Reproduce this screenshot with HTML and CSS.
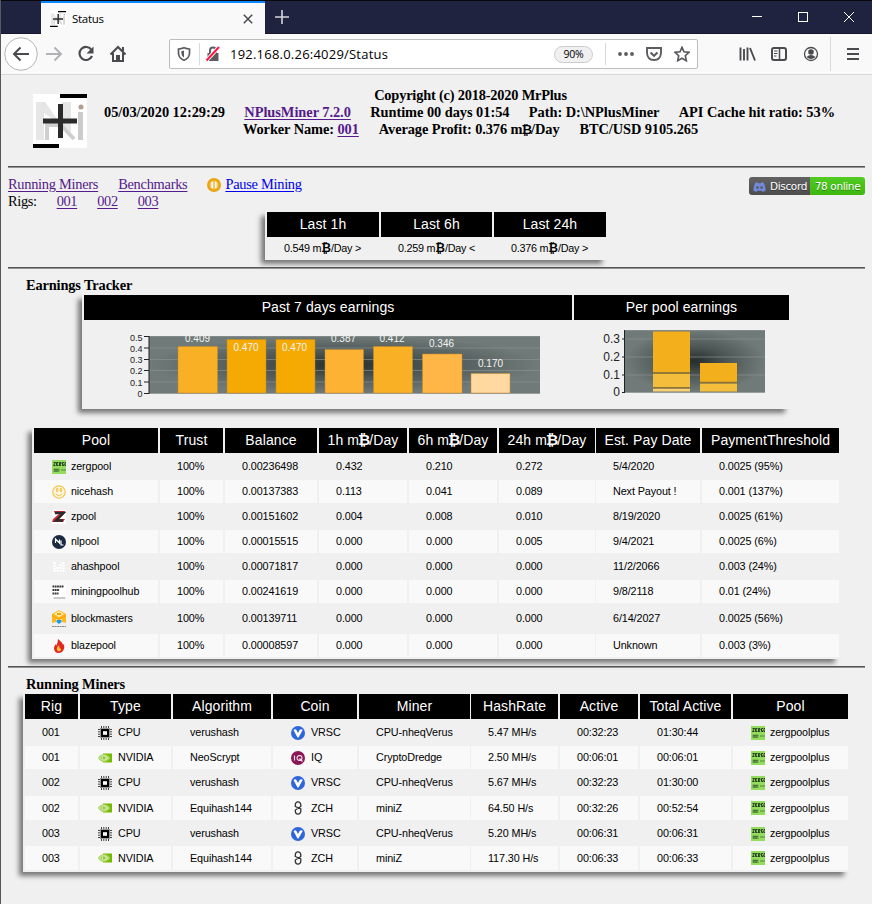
FILE: index.html
```html
<!DOCTYPE html>
<html lang="en">
<head>
<meta charset="utf-8">
<title>Status</title>
<link rel="stylesheet" href="styles.css">
</head>
<body>
<svg class="defs" aria-hidden="true">
  <defs>
    <radialGradient id="glow1" cx="50%" cy="50%" r="50%"><stop offset="0" stop-color="#252e2d"/><stop offset=".45" stop-color="#4c5655"/><stop offset="1" stop-color="#707a78"/></radialGradient>
    <symbol id="plus-logo" viewBox="0 0 54 54"><rect width="54" height="54" fill="#fff"/><path d="M3 8h9l17 24V8h9v30L11 19v27H3z" fill="#e6e6e6"/><path d="M14 29v17M14 31h14M28 31l13 14" stroke="#cfcfcf" stroke-width="4" fill="none"/><path d="M45 18h5v28h-5z" fill="#ccc"/><circle cx="48" cy="13" r="2.500" fill="#b59b8d"/><path d="M10 24.500h34v5H10zM25 10h5v34h-5z" fill="#2b2b2b"/><path d="M27 0h27v4H27zM0 50h26v4H0z"/></symbol>
    <symbol id="zerg" viewBox="0 0 14 14"><rect width="14" height="14" fill="#93dc5e"/><path d="M1.500 2.500h2L1.500 5.500h2M6.500 2.500h-2v3h2m-2-1.500h1.500M7.500 6V2.500h1.500V4H7.500l1.500 2M12 2.500h-1.500v3H12V4M14 2.500h-1v3h1" stroke="#24401c" fill="none"/><path d="M1.500 8.500h6V12h-6z" fill="#6da04c"/><path d="M2 9.500h5m-5 1.500h4M9 10h5" stroke="#3e6e30" stroke-width=".8"/></symbol>
    <symbol id="nice" viewBox="0 0 14 14"><circle cx="7" cy="7" r="6.200" fill="#fff8e5" stroke="#f8c650" stroke-width="1.300"/><path d="M4.600 3.500h1.300v3H4.600zM8.300 3.500h1.300v3H8.300zM3.500 8.500q3.500 4 7 0" fill="none" stroke="#f5b93c" stroke-width=".9"/></symbol>
    <symbol id="zpool" viewBox="0 0 14 14"><rect width="14" height="14" fill="#fff"/><path d="M2 1h11l-1 3-5 5h6l-2 3H0l1-3 6-5H3z" fill="#d22a31"/><path d="M3 3h8.500L4 10.500h7" fill="none" stroke="#2b2b2b" stroke-width="2.400"/></symbol>
    <symbol id="nlpool" viewBox="0 0 14 14"><circle cx="7" cy="7" r="7" fill="#1b2a41"/><path d="M3.500 8V4l4 4V4.500M9 5.500V10h2.500" fill="none" stroke="#fff" stroke-width="1.200"/></symbol>
    <symbol id="ahash" viewBox="0 0 14 14"><path d="M2.500 2v10M5.500 7v5M8.500 4v8M11.500 2v10" stroke="#fff" stroke-width="2.200" stroke-dasharray="2 .7"/></symbol>
    <symbol id="hub" viewBox="0 0 14 14"><rect width="14" height="14" fill="#fff"/><path d="M.5 1.500h11M.5 5h7M.5 8.500h6" stroke="#333" stroke-width="2" stroke-dasharray="1.800 .5"/><path d="M1.500 13h12" stroke="#777" stroke-width=".8"/></symbol>
    <symbol id="block" viewBox="0 0 14 18"><path d="M7 0l7 4v9l-4-1V9L7 10 4 9v3l-4 1V4z" fill="#ffb81a"/><path d="M7 1l5 3-5 3-5-3z" fill="#fff1b0"/><path d="M5 3h4v2H5zM0 5l7 4 7-4v1l-7 4-7-4z" fill="#f29c12"/><path d="M4.500 10h5v2L7 14l-2.500-2z" fill="#1e9be0"/><path d="M0 16.500h14" stroke="#888" stroke-dasharray="2 .5"/></symbol>
    <symbol id="blaze" viewBox="0 0 14 14"><path d="M6 0q5 4 5 6l1-1q1 4-1 7-2 2-4 2-5 0-5-5 0-2 2-4v2q2-3 2-7z" fill="#e32620"/><path d="M6 12q-3-2 1-6 0 3 2 4 0 3-3 2z" fill="#ffc33e"/></symbol>
    <symbol id="cpu" viewBox="0 0 14 14"><path d="M3.500 0v14M5.800 0v14M8.200 0v14M10.500 0v14M0 3.500h14M0 5.800h14M0 8.200h14M0 10.500h14" stroke="#444"/><rect x="2" y="2" width="10" height="10" fill="#999"/><rect x="3" y="3" width="8" height="8"/><rect x="5" y="5.200" width="4" height="3.600" fill="#fff"/></symbol>
    <symbol id="nvidia" viewBox="0 0 14 14"><path d="M5 2.500h9v9H5z" fill="#76b900"/><path d="M0 7q2-3.500 6-4 4 .5 6.500 4-3 4-6.500 4T0 7z" fill="#a3d152"/><path d="M1.500 7q4-5 9 0-5 4.500-9 0zM4 7q2.500-2.500 4.500 0Q6 9 4 7z" fill="none" stroke="#e9f6cf" stroke-width=".7"/><circle cx="6" cy="7" r=".8" fill="#4f9400"/></symbol>
    <symbol id="verus" viewBox="0 0 14 14"><circle cx="7" cy="7" r="7" fill="#2f66d8"/><path d="M2.500 4q2-1.500 3.200.5L7 7l1.600-3q1.400-1.500 3.200-.3L7.800 11q-.8 1-1.600 0z" fill="#fff"/></symbol>
    <symbol id="iq" viewBox="0 0 14 14"><circle cx="7" cy="7" r="7" fill="#8a1656"/><path d="M3.500 4.500v5M8 4.700h1.500Q11 5 11 7t-1.500 2.300H8Q6 9 6 7t2-2.300zM8.500 7.500l3 3" stroke="#f3dce8" stroke-width="1.200" fill="none"/></symbol>
    <symbol id="zch" viewBox="0 0 14 14"><path d="M4.300 6V3.800Q4.500 .8 7 .8t2.800 3V5.500L4.300 9v1.300Q4.500 13.200 7 13.200t2.800-2.900V8L4.300 5.500" stroke="#333" stroke-width="1.300" fill="none"/></symbol>
  </defs>
</svg>

<div class="titlebar">
  <div class="tab">
    <svg class="fav"><use href="#plus-logo"/></svg><span class="tabname">Status</span>
    <svg class="close" viewBox="0 0 10 10"><path d="M.8.8l8.400 8.400M9.200.8L.8 9.200" stroke="#4a4a4f" stroke-width="1.500"/></svg>
  </div>
  <svg class="newtab" viewBox="0 0 14 14"><path d="M7 0v14M0 7h14" stroke="#d5d5dc" stroke-width="1.600"/></svg>
  <div class="winctl">
    <svg viewBox="0 0 46 32"><path d="M18 15.500h10" stroke="#fff"/></svg>
    <svg viewBox="0 0 46 32"><rect x="18.500" y="11.500" width="9" height="9" fill="none" stroke="#fff"/></svg>
    <svg viewBox="0 0 46 32"><path d="M18 11l10 10M28 11L18 21" stroke="#fff"/></svg>
  </div>
</div>
<div class="toolbar">
  <svg class="ic" viewBox="0 0 34 40"><circle cx="17" cy="20" r="16.300" fill="#fff" stroke="#b5b5b7"/><path d="M25 20H10m6.500-6.500L10 20l6.500 6.500" fill="none" stroke="#4a4a4f" stroke-width="2"/></svg>
  <svg class="ic" viewBox="0 0 32 40"><path d="M8 20h15m-6.500-6.500L23 20l-6.500 6.500" fill="none" stroke="#b2b2b5" stroke-width="2"/></svg>
  <svg class="ic" viewBox="0 0 32 40"><path d="M21.500 16A6.500 6.500 0 1 0 22 22" fill="none" stroke="#4a4a4f" stroke-width="2.200"/><path d="M23.500 12.500v7h-7z" fill="#4a4a4f"/></svg>
  <svg class="ic" viewBox="0 0 32 40"><path d="M8.500 20.500L16 13l7.500 7.500M11 19v8h10v-8" fill="none" stroke="#4a4a4f" stroke-width="2"/><path d="M14 21h4v6h-4zM20 13h2v4h-2z" fill="#4a4a4f"/></svg>
  <div class="urlbar">
    <svg class="shield" viewBox="0 0 14 14"><path d="M1.500 2Q4 2 7 .8 10 2 12.500 2v4.500Q12 11.500 7 13.200 2 11.500 1.500 6.500z" fill="none" stroke="#5c5c60" stroke-width="1.700"/><path d="M7 3.500v7Q4.500 9.500 4.300 6V4.300z" fill="#5c5c60"/></svg>
    <i class="sep"></i>
    <svg class="lock" viewBox="0 0 16 16"><path d="M2.500 7h11v8h-11z" fill="#5c5c60"/><path d="M5 7V4.500a3 3 0 0 1 6 0V7" fill="none" stroke="#5c5c60" stroke-width="2"/><path d="M1.500 14.500L14 1" stroke="#f9f9fa" stroke-width="4"/><path d="M1.500 14.500L14 1" stroke="#ff1744" stroke-width="2"/></svg>
    <span class="url">192.168.0.26:4029/Status</span>
    <span class="zoom">90%</span><i class="sep wide"></i>
    <svg class="dots" viewBox="0 0 16 16"><g fill="#5c5c60"><circle cx="2" cy="8" r="1.900"/><circle cx="8" cy="8" r="1.900"/><circle cx="14" cy="8" r="1.900"/></g></svg>
    <svg class="dots" viewBox="0 0 16 16"><path d="M1 2h14v5q-.5 7-7 7T1 7z" fill="none" stroke="#5c5c60" stroke-width="1.900"/><path d="M4.500 6.500L8 9.800l3.500-3.300" fill="none" stroke="#5c5c60" stroke-width="2"/></svg>
    <svg class="dots" viewBox="0 0 16 16"><path d="M8 1.300l2 4.500 5 .5-3.700 3.400 1 5L8 12.200l-4.300 2.500 1-5L1 6.300l5-.5z" fill="none" stroke="#5c5c60" stroke-width="1.700"/></svg>
  </div>
  <div class="tools">
    <svg class="ic" viewBox="0 0 32 40"><path d="M9.500 13.500v13M13 15v11.500M16.500 13.500v13M19 14l5 12.500" stroke="#4a4a4f" stroke-width="1.900"/></svg>
    <svg class="ic" viewBox="0 0 32 40"><rect x="9" y="14" width="14" height="12" rx="2" fill="none" stroke="#4a4a4f" stroke-width="2"/><path d="M16.500 14v12" stroke="#4a4a4f" stroke-width="1.500"/><path d="M11 17h3.500M11 19.500h3.500M11 22h2.500" stroke="#4a4a4f"/></svg>
    <svg class="ic" viewBox="0 0 32 40"><circle cx="16" cy="20" r="6.500" fill="none" stroke="#4a4a4f" stroke-width="1.300"/><circle cx="16" cy="18" r="2.800" fill="#4a4a4f"/><path d="M11.500 23q4.500-4 9 0-4.500 4-9 0z" fill="#4a4a4f"/></svg>
    <i class="sep tall"></i>
    <svg class="ic menu" viewBox="0 0 32 40"><path d="M10 15h12M10 20h12M10 25h12" stroke="#4a4a4f" stroke-width="2"/></svg>
  </div>
</div>

<main>
  <header>
    <svg class="logo"><use href="#plus-logo"/></svg>
    <div class="info">
      <div class="line"><b>Copyright (c) 2018-2020 MrPlus</b></div>
      <div class="line"><b>05/03/2020 12:29:29</b><b><a>NPlusMiner 7.2.0</a></b><b>Runtime 00 days 01:54</b><b>Path: D:\NPlusMiner</b><b>API Cache hit ratio: 53%</b></div>
      <div class="line third"><b>Worker Name: <a>001</a></b><b>Average Profit: 0.376 m<span class="btc">₿</span>/Day</b><b>BTC/USD 9105.265</b></div>
    </div>
  </header>
  <hr>
  <nav>
    <div>
      <div class="links"><a>Running Miners</a><a>Benchmarks</a><span class="pause"><svg viewBox="0 0 14 14"><circle cx="7" cy="7" r="7" fill="#eba410"/><circle cx="7" cy="7" r="4.500" fill="#f5c55e"/><path d="M5.200 4v6M8.800 4v6" stroke="#fff" stroke-width="1.600"/></svg><a class="new">Pause Mining</a></span></div>
      <div class="links rigs"><span>Rigs:</span><a>001</a><a>002</a><a>003</a></div>
    </div>
    <div class="badge"><span class="name"><svg viewBox="0 0 14 12"><path d="M2.500 1.500L5 1l.5 1h3L9 1l2.500.5Q14 6 13.500 10L10.500 11.500 9.500 10h-5l-1 1.500L.5 10Q0 6 2.500 1.500z" fill="#7289da"/><circle cx="4.800" cy="6.500" r="1.300" fill="#555"/><circle cx="9.200" cy="6.500" r="1.300" fill="#555"/></svg>Discord</span><span class="online">78 online</span></div>
  </nav>

  <section class="panel profit">
    <div class="row head"><div>Last 1h</div><div>Last 6h</div><div>Last 24h</div></div>
    <div class="row"><div>0.549 m<span class="btc">₿</span>/Day &gt;</div><div>0.259 m<span class="btc">₿</span>/Day &lt;</div><div>0.376 m<span class="btc">₿</span>/Day &gt;</div></div>
  </section>
  <hr class="after">
  <h2>Earnings Tracker</h2>
  <section class="panel earnings">
    <div class="row head"><div>Past 7 days earnings</div><div>Per pool earnings</div></div>
    <div class="row charts">
      <svg viewBox="84 320 488 87">
        <clipPath id="plot1"><path d="M149 336h391v58H149z"/></clipPath>
        <rect x="149" y="336" width="391" height="57.500" fill="url(#glow1)"/>
        <path d="M149 336.500h391M149 348h391M149 359.500h391M149 370.500h391M149 382h391M149 393.500h391" stroke="#8c9493" stroke-opacity=".65"/>
        <path d="M149 336v58M144 336.500h5M144 348h5M144 359.500h5M144 370.500h5M144 382h5M144 393.500h5" stroke="#222"/>
        <g stroke="#c48a25" stroke-width=".5">
          <path d="M178 346.500h39.500V393H178z" fill="#f9b024"/><path d="M227 339.500h39V393h-39zM276 339.500h39V393h-39z" fill="#f4a903"/><path d="M325 349.500h38.500V393H325z" fill="#fdb234"/><path d="M373.500 346.500h39V393h-39z" fill="#f9b024"/><path d="M422.500 354h39.500v39h-39.500z" fill="#ffb647"/><path d="M471 373.500h39V393h-39z" fill="#ffd9a0"/>
        </g>
        <g class="val" clip-path="url(#plot1)"><text x="197.500" y="342">0.409</text><text x="246" y="351">0.470</text><text x="294.500" y="351">0.470</text><text x="343.500" y="342">0.387</text><text x="392" y="342">0.412</text><text x="441.500" y="346.500">0.346</text><text x="490.500" y="367">0.170</text></g>
        <g class="axis"><text x="142.500" y="341">0.5</text><text x="142.500" y="352">0.4</text><text x="142.500" y="363">0.3</text><text x="142.500" y="374">0.2</text><text x="142.500" y="385.500">0.1</text><text x="142.500" y="397">0</text></g>
      </svg>
      <svg viewBox="574 320 215 87">
        <rect x="625" y="330" width="140" height="62.500" fill="url(#glow1)"/>
        <path d="M625 330.500h140M625 339h140M625 357h140M625 375h140M625 392.500h140" stroke="#8c9493" stroke-opacity=".65"/>
        <path d="M624.500 330v63M622 339h3M622 357h3M622 375h3M622 392.500h3" stroke="#222"/>
        <path d="M653 331.500h37v41h-37zM700 363h37v19.500h-37z" fill="#f3b01c"/><path d="M653 373.500h37V387h-37zM700 383.500h37v8h-37z" fill="#f5bd3c"/><path d="M653 388.500h37v3h-37z" fill="#fbd075"/>
        <path d="M653 373h37M700 382.500h37M653 387.800h37" stroke="#8d7435" stroke-width="1.400"/>
        <g class="axis big"><text x="620" y="342.500">0.3</text><text x="620" y="360.500">0.2</text><text x="620" y="378.500">0.1</text><text x="620" y="396">0</text></g>
      </svg>
    </div>
  </section>

  <section class="panel pools">
    <div class="row head"><div>Pool</div><div>Trust</div><div>Balance</div><div>1h m<span class="btc">₿</span>/Day</div><div>6h m<span class="btc">₿</span>/Day</div><div>24h m<span class="btc">₿</span>/Day</div><div>Est. Pay Date</div><div>PaymentThreshold</div></div>
    <div class="row"><div><svg class="i"><use href="#zerg"/></svg>zergpool</div><div>100%</div><div>0.00236498</div><div>0.432</div><div>0.210</div><div>0.272</div><div>5/4/2020</div><div>0.0025 (95%)</div></div>
    <div class="row"><div><svg class="i"><use href="#nice"/></svg>nicehash</div><div>100%</div><div>0.00137383</div><div>0.113</div><div>0.041</div><div>0.089</div><div>Next Payout !</div><div>0.001 (137%)</div></div>
    <div class="row"><div><svg class="i"><use href="#zpool"/></svg>zpool</div><div>100%</div><div>0.00151602</div><div>0.004</div><div>0.008</div><div>0.010</div><div>8/19/2020</div><div>0.0025 (61%)</div></div>
    <div class="row"><div><svg class="i"><use href="#nlpool"/></svg>nlpool</div><div>100%</div><div>0.00015515</div><div>0.000</div><div>0.000</div><div>0.005</div><div>9/4/2021</div><div>0.0025 (6%)</div></div>
    <div class="row"><div><svg class="i"><use href="#ahash"/></svg>ahashpool</div><div>100%</div><div>0.00071817</div><div>0.000</div><div>0.000</div><div>0.000</div><div>11/2/2066</div><div>0.003 (24%)</div></div>
    <div class="row"><div><svg class="i"><use href="#hub"/></svg>miningpoolhub</div><div>100%</div><div>0.00241619</div><div>0.000</div><div>0.000</div><div>0.000</div><div>9/8/2118</div><div>0.01 (24%)</div></div>
    <div class="row high"><div><svg class="i tallicon"><use href="#block"/></svg>blockmasters</div><div>100%</div><div>0.00139711</div><div>0.000</div><div>0.000</div><div>0.000</div><div>6/14/2027</div><div>0.0025 (56%)</div></div>
    <div class="row"><div><svg class="i"><use href="#blaze"/></svg>blazepool</div><div>100%</div><div>0.00008597</div><div>0.000</div><div>0.000</div><div>0.000</div><div>Unknown</div><div>0.003 (3%)</div></div>
  </section>
  <hr class="after">
  <h2>Running Miners</h2>
  <section class="panel miners">
    <div class="row head"><div>Rig</div><div>Type</div><div>Algorithm</div><div>Coin</div><div>Miner</div><div>HashRate</div><div>Active</div><div>Total Active</div><div>Pool</div></div>
    <div class="row"><div>001</div><div><svg class="i"><use href="#cpu"/></svg>CPU</div><div>verushash</div><div><svg class="i"><use href="#verus"/></svg>VRSC</div><div>CPU-nheqVerus</div><div>5.47 MH/s</div><div>00:32:23</div><div>01:30:44</div><div><svg class="i"><use href="#zerg"/></svg>zergpoolplus</div></div>
    <div class="row"><div>001</div><div><svg class="i"><use href="#nvidia"/></svg>NVIDIA</div><div>NeoScrypt</div><div><svg class="i"><use href="#iq"/></svg>IQ</div><div>CryptoDredge</div><div>2.50 MH/s</div><div>00:06:01</div><div>00:06:01</div><div><svg class="i"><use href="#zerg"/></svg>zergpoolplus</div></div>
    <div class="row"><div>002</div><div><svg class="i"><use href="#cpu"/></svg>CPU</div><div>verushash</div><div><svg class="i"><use href="#verus"/></svg>VRSC</div><div>CPU-nheqVerus</div><div>5.67 MH/s</div><div>00:32:23</div><div>01:30:00</div><div><svg class="i"><use href="#zerg"/></svg>zergpoolplus</div></div>
    <div class="row plus"><div>002</div><div><svg class="i"><use href="#nvidia"/></svg>NVIDIA</div><div>Equihash144</div><div><svg class="i"><use href="#zch"/></svg>ZCH</div><div>miniZ</div><div>64.50 H/s</div><div>00:32:26</div><div>00:52:54</div><div><svg class="i"><use href="#zerg"/></svg>zergpoolplus</div></div>
    <div class="row less"><div>003</div><div><svg class="i"><use href="#cpu"/></svg>CPU</div><div>verushash</div><div><svg class="i"><use href="#verus"/></svg>VRSC</div><div>CPU-nheqVerus</div><div>5.20 MH/s</div><div>00:06:31</div><div>00:06:31</div><div><svg class="i"><use href="#zerg"/></svg>zergpoolplus</div></div>
    <div class="row plus"><div>003</div><div><svg class="i"><use href="#nvidia"/></svg>NVIDIA</div><div>Equihash144</div><div><svg class="i"><use href="#zch"/></svg>ZCH</div><div>miniZ</div><div>117.30 H/s</div><div>00:06:33</div><div>00:06:33</div><div><svg class="i"><use href="#zerg"/></svg>zergpoolplus</div></div>
  </section>
</main>
</body>
</html>
```
FILE: styles.css
```css
* { box-sizing: border-box; }
body { margin: 0; width: 872px; height: 904px; overflow: hidden; background: #f0f0f0; color: #000; border-left: 1px solid #55585c; font: 14.4px/17px "Liberation Serif", serif; }
svg { display: block; flex: none; }
.defs { position: absolute; width: 0; height: 0; }

.titlebar { display: flex; height: 34px; background: #202340; border-top: 1px solid #08080c; border-bottom: 1px solid #17162b; padding-left: 40px; font-family: "Open Sans", sans-serif; }
.tab { display: flex; align-items: center; width: 224px; height: 33px; background: #f9f9fa; border-top: 2px solid #0a84ff; padding: 0 12px 0 9px; }
.fav { width: 16px; height: 16px; }
.tabname { margin-left: 6px; font-size: 11.5px; letter-spacing: -0.3px; flex: 1; }
.close { width: 10px; height: 10px; }
.newtab { width: 14px; height: 14px; margin: 9px 0 0 10px; }
.winctl { display: flex; margin-left: auto; }
.winctl svg { width: 46px; height: 32px; }

.toolbar { display: flex; align-items: center; height: 41px; background: #f9f9fa; border-bottom: 1px solid #d7d7d9; padding-left: 4px; font-family: "Open Sans", sans-serif; }
.ic { width: 32px; height: 40px; }
.ic:first-child { width: 34px; margin-left: -1px; }
.tools .ic:first-child { width: 32px; margin-left: 0; }
.urlbar { display: flex; align-items: center; width: 529px; height: 30px; margin-left: 35px; background: #fff; border: 1px solid #bdbdbf; border-radius: 2px; padding: 0 7px 0 7px; }
.shield { width: 14px; height: 14px; }
.sep { width: 1px; height: 22px; background: #d9d9db; margin: 0 5px 0 8px; }
.lock { width: 16px; height: 16px; }
.url { margin-left: 9px; font-size: 13px; letter-spacing: .22px; }
.zoom { margin-left: auto; width: 39px; height: 17px; border: 1px solid #ccc; border-radius: 9px; background: #f0f0f1; text-align: center; font-size: 10.500px; line-height: 15px; letter-spacing: -0.3px; }
.sep.wide { margin: 0 12px; }
.dots { width: 16px; height: 16px; }
.dots + .dots { margin-left: 12px; }
.tools { display: flex; align-items: center; margin-left: auto; padding-right: 3px; }
.sep.tall { height: 34px; margin: 0 6px 0 3px; }

main { padding: 0 7px; }
header { display: flex; height: 91px; padding-left: 25px; }
.logo { width: 54px; height: 54px; margin-top: 19px; }
.info { flex: none; width: 731px; margin: 12px 0 0 17px; }
.line { display: flex; justify-content: space-between; height: 17px; white-space: nowrap; letter-spacing: -0.05px; }
.line:first-child { justify-content: center; letter-spacing: -0.2px; padding-left: 2px; }
.line.third { width: 455px; margin-left: 139px; letter-spacing: -0.09px; }
.line .btc { font-size: 13px; margin: 0 -1px; }
a { color: #551a8b; text-decoration: underline; text-underline-offset: 2px; }
a.new { color: #0000ee; }
.btc { font-family: "DejaVu Sans", sans-serif; font-weight: 700; font-size: 1.1em; letter-spacing: 0; line-height: 1; }
hr { height: 2px; border: 0; border-top: 1px solid #555; border-bottom: 1px solid #929292; margin: 0; }
hr.after { margin-top: 7px; }
nav { display: flex; justify-content: space-between; height: 42px; padding-top: 8px; }
.links { display: flex; gap: 20px; letter-spacing: -0.27px; }
.links.rigs { letter-spacing: -0.35px; }
.pause { display: flex; gap: 4px; }
.pause svg { width: 14px; height: 14px; margin-top: 2px; }
.badge { display: flex; width: 116px; height: 18px; margin-top: 1px; border-radius: 3px; overflow: hidden; color: #fff; font: 10.500px/19px "DejaVu Sans", sans-serif; text-shadow: 0 1px #0005; }
.badge .name { display: flex; width: 61px; background: linear-gradient(#626262, #4d4d4d); padding-left: 4px; gap: 4px; letter-spacing: -0.35px; }
.badge .name svg { width: 13px; height: 12px; margin-top: 4px; }
.badge .online { width: 55px; background: linear-gradient(#52cc22, #3db60e); text-align: center; letter-spacing: -0.35px; }
h2 { height: 16px; margin: 8px 0 0 18px; font: bold 14.4px/17px "Liberation Serif", serif; letter-spacing: -0.15px; }

.panel { display: grid; gap: 2px; padding: 2px; width: max-content; box-shadow: -5px 5px 5px -1px #777; background: #f0f0f0; font: 10.800px/23px "Liberation Sans", sans-serif; }
.row { display: grid; column-gap: 2px; height: 23px; white-space: nowrap; letter-spacing: -0.1px; }
.row > div { padding-left: 17px; display: flex; align-items: center; }
.row.head { height: 25px; line-height: 25px; font-size: 14px; letter-spacing: .1px; color: #fff; }
.row.head > div { background: #000; padding: 0; justify-content: center; }
.row:nth-child(odd) > div { background: #f9f9f9; }
.row.head:nth-child(odd) > div { background: #000; }
.head .btc { font-size: 15px; margin: 0 -1px; }
.i { width: 14px; height: 14px; margin: 0 5px 0 1px; }
.miners .i { margin-right: 6px; }
.miners div:last-child > .i { margin-right: 5px; }
.tallicon { height: 18px; }
.row.high { height: 27px; }
.row.plus { height: 24px; }
.row.less { height: 22px; }
.pools .row:not(.head) > div:first-child, .miners .row:not(.head) > div:last-child { font-size: 10.700px; letter-spacing: -0.1px; }

.profit { margin-left: 257px; }
.profit .row { grid-template-columns: 112px 111px 112px; }
.profit .row:last-child { height: 19px; line-height: 19px; }
.profit .row:last-child > div { padding-bottom: 1px; letter-spacing: -0.25px; }
.earnings { margin-left: 74px; }
.earnings .row { grid-template-columns: 488px 215px; }
.row.charts { height: 87px; margin-top: -2px; }
.charts > svg { width: 100%; height: 87px; }
.val, .axis { font-family: "Liberation Sans", sans-serif; letter-spacing: 0; }
.val { fill: #f4f4f4; text-anchor: middle; font-size: 10px; }
.axis { fill: #222; text-anchor: end; font-size: 9px; }
.axis.big { font-size: 12px; }
.pools { margin: 17px 0 0 24px; }
.pools .row { grid-template-columns: 124px 63px 92px 88px 88px 96px 103px 137px; }
.pools .row > div:nth-child(7) { margin-left: -1px; }
.miners { margin-left: 15px; }
.miners .row { grid-template-columns: 53px 91px 98px 84px 111px 86px 78px 91px 115px; }
.miners .row > div:nth-child(6) { margin-left: -1px; }
```
